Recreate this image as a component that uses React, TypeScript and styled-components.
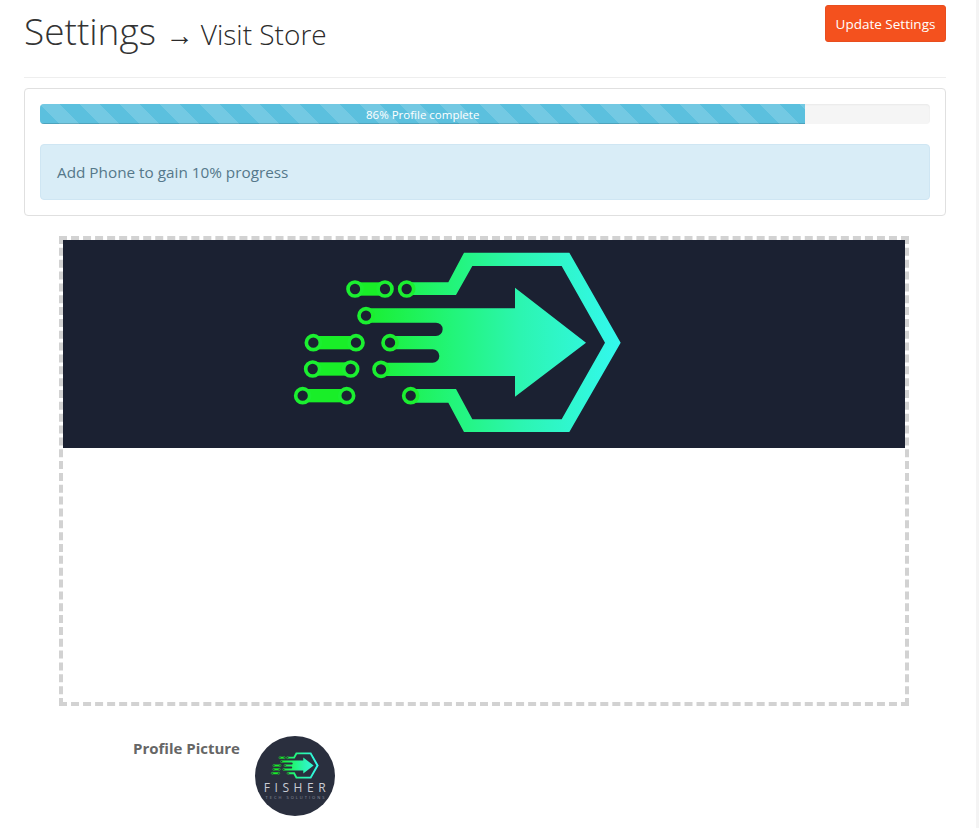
import React from "react";
import styled, { createGlobalStyle } from "styled-components";

const Global = createGlobalStyle`
  html, body { margin: 0; padding: 0; background: #fff; }
  body { font-family: "Open Sans", "Liberation Sans", sans-serif; color: #555; overflow: hidden; }
`;

const Page = styled.div`
  width: 979px;
  height: 828px;
  box-sizing: border-box;
  padding: 5px 30px 0 24px;
  border-right: 3px solid #f4f4f4;
  overflow: hidden;
`;

const Header = styled.header`
  display: flex;
  justify-content: space-between;
  align-items: flex-start;
  height: 72px;
  border-bottom: 1px solid #eee;
`;

const Title = styled.h1`
  margin: 0;
  padding-top: 1px;
  font-weight: 300;
  font-size: 37px;
  line-height: 50px;
  color: #333;
  white-space: nowrap;
`;

const Subtitle = styled.small`
  font-size: 28px;
  font-weight: 300;
  color: #2b2b2b;
`;

const UpdateButton = styled.button`
  width: 121px;
  height: 37px;
  border: 1px solid #e84e1f;
  border-radius: 3px;
  background: #f4511e;
  color: #fff;
  font-family: inherit;
  font-size: 13.5px;
  padding: 0;
`;

const Card = styled.section`
  margin-top: 10px;
  height: 128px;
  box-sizing: border-box;
  padding: 15px;
  border: 1px solid #e0e0e0;
  border-radius: 4px;
`;

const Progress = styled.div`
  position: relative;
  height: 20px;
  border-radius: 4px;
  background: #f5f5f5;
  box-shadow: inset 0 1px 2px rgba(0, 0, 0, 0.05);
  overflow: hidden;
`;

const ProgressBar = styled.div`
  height: 100%;
  background-color: #5bc0de;
  background-image: linear-gradient(
    45deg,
    rgba(255, 255, 255, 0.15) 25%,
    transparent 25%,
    transparent 50%,
    rgba(255, 255, 255, 0.15) 50%,
    rgba(255, 255, 255, 0.15) 75%,
    transparent 75%,
    transparent
  );
  background-size: 40px 40px;
  box-shadow: inset 0 -1px 0 rgba(0, 0, 0, 0.15);
  color: #fff;
  font-size: 11.5px;
  line-height: 21px;
  text-align: center;
  white-space: nowrap;
`;

const Alert = styled.div`
  margin-top: 20px;
  height: 56px;
  box-sizing: border-box;
  padding: 0 16px;
  display: flex;
  align-items: center;
  background: #d9edf7;
  border: 1px solid #cfe6f3;
  border-radius: 4px;
  color: #55788a;
  font-size: 15.3px;
`;

const Dropzone = styled.div`
  margin: 20px 0 0 35px;
  width: 850px;
  height: 470px;
  box-sizing: border-box;
  border: 4px dashed #d2d2d2;
`;

const Banner = styled.div`
  height: 208px;
  background: #1b2132;
  display: flex;
`;

const BannerLogo = styled.svg`
  width: 842px;
  height: 208px;
  display: block;
`;

const ProfileRow = styled.div`
  margin: 30px 0 0 109px;
  display: flex;
  align-items: flex-start;
  gap: 15px;
`;

const ProfileLabel = styled.label`
  padding-top: 2px;
  font-size: 15px;
  line-height: 20px;
  font-weight: 700;
  color: #666;
  white-space: nowrap;
`;

const Avatar = styled.div`
  width: 80px;
  height: 80px;
  border-radius: 50%;
  background: #2a2f3e;
  display: flex;
  flex-direction: column;
  align-items: center;
  padding-top: 16px;
  box-sizing: border-box;
  overflow: hidden;
`;

const AvatarLogo = styled.svg`
  width: 50px;
  height: 27px;
  display: block;
  flex: none;
`;

const AvatarName = styled.div`
  margin: 3px -4px 0 0;
  color: #c9ccd4;
  font-size: 12px;
  font-weight: 400;
  line-height: 11px;
  letter-spacing: 4.6px;
  white-space: nowrap;
`;

const AvatarTag = styled.div`
  margin: 2px -2px 0 0;
  color: #8f94a0;
  font-size: 4px;
  line-height: 5px;
  letter-spacing: 2px;
  white-space: nowrap;
`;

const Mark = ({ id, dark }: { id: string; dark: string }) => {
  const pills: [number, number, number][] = [
    [225, 315, 147],
    [100, 228, 308],
    [98, 212, 387],
    [68, 200, 467],
  ];
  const holes: [number, number][] = [
    [225, 147], [315, 147], [380, 147], [258, 227], [100, 308], [228, 308],
    [330, 308], [98, 387], [212, 387], [303, 388], [68, 467], [200, 467], [392, 467],
  ];
  return (
    <>
      <defs>
        <linearGradient id={id} gradientUnits="userSpaceOnUse" x1="230" y1="0" x2="1020" y2="0">
          <stop offset="0" stopColor="#19ee28" />
          <stop offset="0.36" stopColor="#22f578" />
          <stop offset="0.62" stopColor="#2cf5b0" />
          <stop offset="1" stopColor="#33f8ee" />
        </linearGradient>
      </defs>
      {pills.map(([a, b, y]) => (
        <rect key={`${a}-${y}`} x={a} y={y - 20} width={b - a} height={40} fill="#19ee28" />
      ))}
      <path
        fill={`url(#${id})`}
        d="M380 127H505L552 38H868L1022 308L868 576H552L505 488H392V447H528L577 538H845L975 308L845 78H577L528 165H380Z"
      />
      <path
        fill={`url(#${id})`}
        d="M258 205H705V143L918 308L705 470V408H303V368H458A20 20 0 0 0 458 328H330V288H468A20 20 0 0 0 468 248H258Z"
      />
      {holes.map(([x, y]) => (
        <circle key={`${x}-${y}`} cx={x} cy={y} r={21} fill={dark} stroke="#1bef30" strokeWidth={11} />
      ))}
    </>
  );
};

export default function App() {
  return (
    <Page>
      <Global />
      <Header>
        <Title>
          Settings <Subtitle>→ Visit Store</Subtitle>
        </Title>
        <UpdateButton>Update Settings</UpdateButton>
      </Header>
      <Card>
        <Progress>
          <ProgressBar style={{ width: "86%" }}>86% Profile complete</ProgressBar>
        </Progress>
        <Alert>Add Phone to gain 10% progress</Alert>
      </Card>
      <Dropzone>
        <Banner>
          <BannerLogo viewBox="-651 0 2526 624">
            <Mark id="bannerGrad" dark="#1b2132" />
          </BannerLogo>
        </Banner>
      </Dropzone>
      <ProfileRow>
        <ProfileLabel>Profile Picture</ProfileLabel>
        <Avatar>
          <AvatarLogo viewBox="40 30 990 555">
            <Mark id="avatarGrad" dark="#2a2f3e" />
          </AvatarLogo>
          <AvatarName>FISHER</AvatarName>
          <AvatarTag>TECH SOLUTIONS</AvatarTag>
        </Avatar>
      </ProfileRow>
    </Page>
  );
}
